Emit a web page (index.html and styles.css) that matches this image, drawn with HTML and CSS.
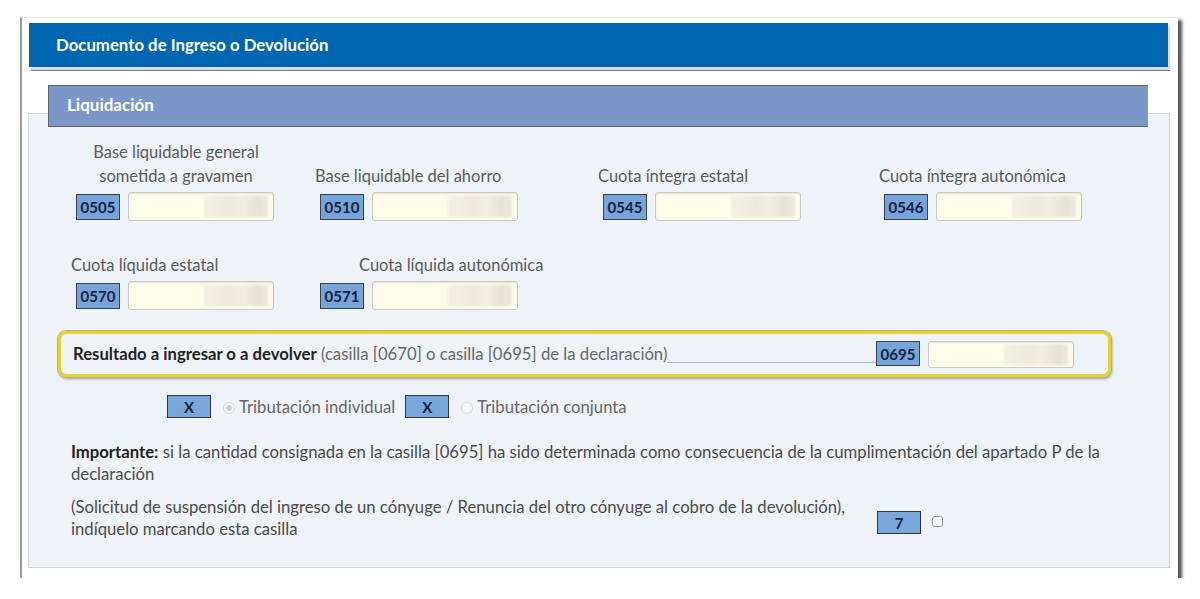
FILE: index.html
```html
<!DOCTYPE html>
<html lang="es">
<head>
  <meta charset="UTF-8">
  <title>Documento de Ingreso o Devolución</title>
  <link rel="stylesheet" href="styles.css">
</head>
<body>
  <div class="window">
    <div class="doc-header">Documento de Ingreso o Devolución</div>

    <div class="section">
      <div class="tab">Liquidación</div>
      <div class="panel">

        <div class="fields">
          <div class="field">
            <div class="label label-center">Base liquidable general<br>sometida a gravamen</div>
            <div class="field-row">
              <span class="code">0505</span>
              <span class="amount"><span class="blur"></span></span>
            </div>
          </div>
          <div class="field">
            <div class="label label-left">Base liquidable del ahorro</div>
            <div class="field-row">
              <span class="code">0510</span>
              <span class="amount"><span class="blur"></span></span>
            </div>
          </div>
          <div class="field">
            <div class="label label-left">Cuota íntegra estatal</div>
            <div class="field-row">
              <span class="code">0545</span>
              <span class="amount"><span class="blur"></span></span>
            </div>
          </div>
          <div class="field">
            <div class="label label-left">Cuota íntegra autonómica</div>
            <div class="field-row">
              <span class="code">0546</span>
              <span class="amount"><span class="blur"></span></span>
            </div>
          </div>
        </div>

        <div class="fields fields-second">
          <div class="field">
            <div class="label label-left">Cuota líquida estatal</div>
            <div class="field-row">
              <span class="code">0570</span>
              <span class="amount"><span class="blur"></span></span>
            </div>
          </div>
          <div class="field">
            <div class="label label-indent">Cuota líquida autonómica</div>
            <div class="field-row">
              <span class="code">0571</span>
              <span class="amount"><span class="blur"></span></span>
            </div>
          </div>
        </div>

        <div class="result">
          <div class="result-text"><b>Resultado a ingresar o a devolver</b> (casilla [0670] o casilla [0695] de la declaración)</div>
          <div class="result-line"></div>
          <span class="code">0695</span>
          <span class="amount"><span class="blur"></span></span>
        </div>

        <div class="tributacion">
          <span class="mark">X</span>
          <span class="radio radio-on"></span>
          <span class="trib-label">Tributación individual</span>
          <span class="mark">X</span>
          <span class="radio"></span>
          <span class="trib-label">Tributación conjunta</span>
        </div>

        <p class="note"><b>Importante:</b> si la cantidad consignada en la casilla [0695] ha sido determinada como consecuencia de la cumplimentación del apartado P de la declaración</p>

        <div class="suspension">
          <p class="note suspension-text">(Solicitud de suspensión del ingreso de un cónyuge / Renuncia del otro cónyuge al cobro de la devolución), indíquelo marcando esta casilla</p>
          <span class="mark mark-seven">7</span>
          <span class="check"></span>
        </div>

      </div>
    </div>
  </div>
</body>
</html>
```

FILE: styles.css
```css
body {
  margin: 0;
  background: #fff;
  font-family: 'Lato', 'Open Sans', sans-serif;
  color: #555;
}
.window {
  margin: 17px 0 0 20px;
  width: 1158px;
  height: 561px;
  background: #fff;
  border-left: 2px solid #9a9a9a;
  border-top: 1px solid #e6e6e6;
  box-shadow: 4px 3px 3px #555;
  box-sizing: border-box;
  padding-top: 5px;
}
.doc-header {
  margin: 0 10px 0 7px;
  height: 44px;
  background: #0066b2;
  color: #fff;
  font-weight: bold;
  font-size: 16.8px;
  line-height: 44px;
  padding-left: 27px;
  box-shadow: 2px 3px 0 #d6dde6, 2px 4px 0 #7d7d7d;
}
.section {
  margin-top: 18px;
}
.tab {
  position: relative;
  z-index: 1;
  margin-left: 26px;
  width: 1100px;
  height: 42px;
  box-sizing: border-box;
  background: #7b97c9;
  border: 1px solid #5d6470;
  border-right-color: #8c9ab0;
  color: #fff;
  font-weight: bold;
  font-size: 17px;
  line-height: 38px;
  padding-left: 18px;
}
.panel {
  margin: -14px 8px 0 6px;
  background: #eef2f9;
  border: 1px solid #cfd3d9;
  height: 455px;
  box-sizing: border-box;
  padding: 26px 0 0 0;
}
.fields {
  display: grid;
  grid-template-columns: 244px 283px 281px 240px;
  padding-left: 47px;
  align-items: end;
}
.fields-second {
  margin-top: 32px;
}
.field {
  display: flex;
  flex-direction: column;
}
.label {
  font-size: 16.5px;
  line-height: 24px;
  color: #5a5a5a;
  margin-bottom: 4px;
  white-space: nowrap;
}
.label-center {
  text-align: center;
  width: 196px;
  padding-left: 2px;
}
.label-left {
  margin-left: -5px;
}
.label-indent {
  margin-left: 39px;
}
.field-row {
  display: flex;
  align-items: center;
  gap: 8px;
}
.code {
  width: 44px;
  height: 26px;
  box-sizing: border-box;
  background: #76a4db;
  border: 1px solid #3a4252;
  color: #14213a;
  font-weight: bold;
  font-size: 15px;
  line-height: 24px;
  text-align: center;
  flex: none;
}
.amount {
  display: flex;
  justify-content: flex-end;
  align-items: center;
  width: 146px;
  height: 29px;
  box-sizing: border-box;
  background: #fcfbe7;
  border: 1px solid #c9c9c2;
  border-radius: 3px;
  box-shadow: inset 0 1px 1px #e3e2d6;
  padding-right: 5px;
  flex: none;
}
.blur {
  width: 64px;
  height: 21px;
  background: linear-gradient(90deg, #f1f0e3 0%, #ebe9dc 40%, #efeee1 60%, #e3e1d3 85%, #eceadd 100%);
  filter: blur(0.8px);
}
.result {
  margin: 21px 0 0 29px;
  width: 1053px;
  height: 46px;
  box-sizing: border-box;
  border: 3px solid #e6d22b;
  border-radius: 8px;
  box-shadow: 0 0 0 1px #b5b08a, 1px 2px 3px #9a9a9a;
  display: flex;
  align-items: center;
  padding: 0 34px 0 12px;
}
.result-text {
  font-size: 16.7px;
  color: #666;
  white-space: nowrap;
}
.result-text b {
  color: #222;
}
.result-line {
  flex: 1;
  align-self: flex-end;
  margin: 0 -10px 11px 0;
  border-bottom: 1px solid #b0b0b0;
}
.result .code {
  height: 25px;
  margin-top: -2px;
}
.result .amount {
  margin-left: 8px;
  height: 27px;
}
.tributacion {
  display: flex;
  align-items: center;
  margin: 18px 0 0 138px;
  height: 23px;
}
.mark {
  width: 44px;
  height: 23px;
  box-sizing: border-box;
  background: #78a7dc;
  border: 1px solid #2e3440;
  color: #1a2238;
  font-weight: bold;
  font-size: 15px;
  line-height: 22px;
  text-align: center;
  flex: none;
}
.radio {
  width: 10px;
  height: 10px;
  border-radius: 50%;
  border: 1px solid #d6d9de;
  background: #f4f6f9;
  margin: 2px 4px 0 12px;
  flex: none;
}
.radio-on {
  background: radial-gradient(circle, #c9ccd2 35%, #f4f6f9 45%);
}
.trib-label {
  font-size: 16.7px;
  color: #666;
  margin-right: 10px;
}
.note {
  margin: 23px 0 0 42px;
  width: 1045px;
  font-size: 16.7px;
  line-height: 22px;
  color: #4a4a4a;
}
.note b {
  color: #222;
}
.suspension {
  display: flex;
  align-items: flex-start;
  margin-top: 11px;
}
.suspension-text {
  margin-top: 0;
  width: 790px;
}
.mark-seven {
  margin: 15px 0 0 16px;
}
.check {
  width: 11px;
  height: 11px;
  box-sizing: border-box;
  border: 1px solid #8a8f98;
  border-radius: 3px;
  background: #fff;
  margin: 20px 0 0 11px;
}
```
